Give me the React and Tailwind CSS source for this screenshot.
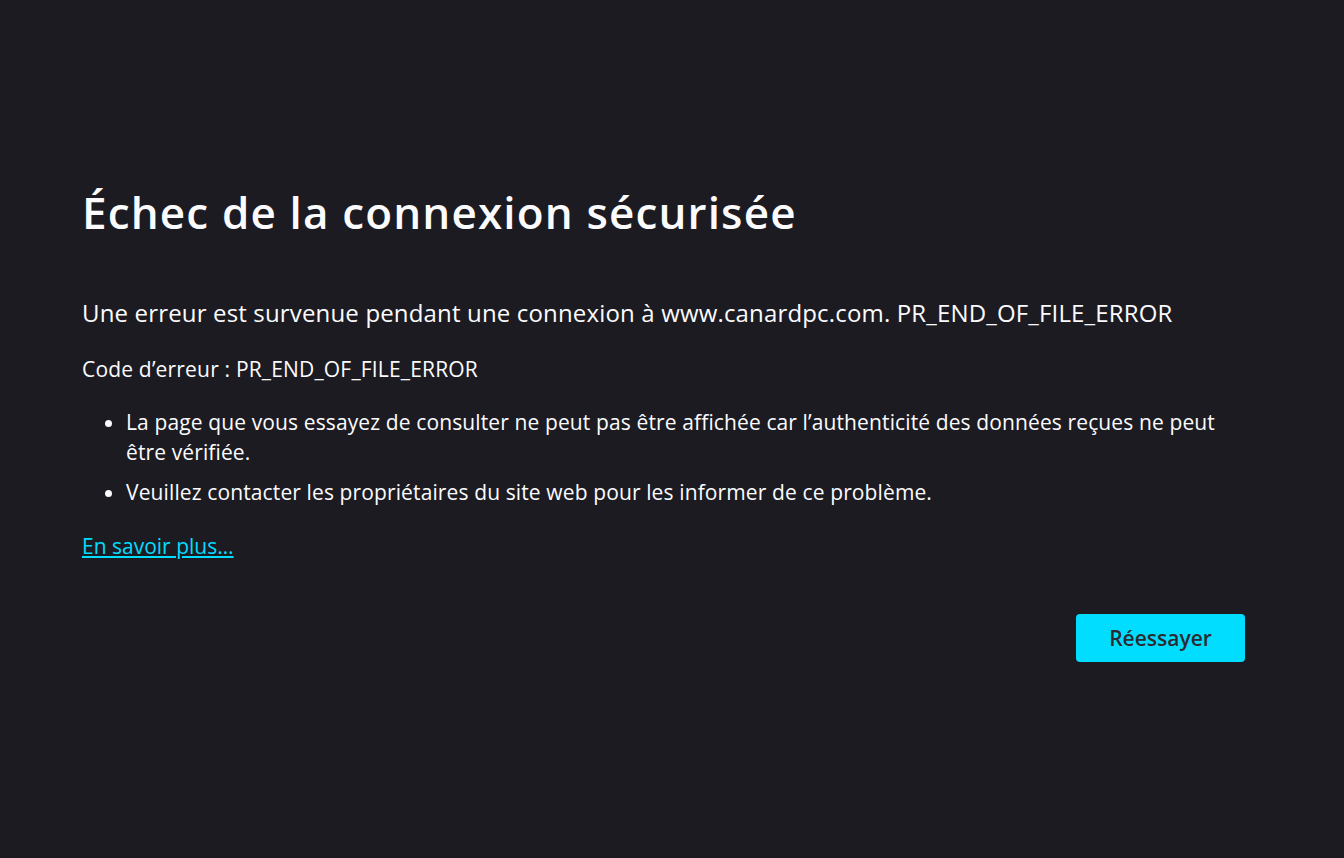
export default function App() {
  return (
    <div className="min-h-screen bg-[#1c1b22] text-[#fbfbfe] font-['Open_Sans',sans-serif]">
      <div className="pl-[82px] pr-[99px] pt-[184px]">
        <h1 className="text-[44px] font-semibold leading-[56px] tracking-[1.15px]">Échec de la connexion sécurisée</h1>

        <p className="mt-[57px] text-[24px] leading-[32px] tracking-[0.16px]">
          Une erreur est survenue pendant une connexion à www.canardpc.com. PR_END_OF_FILE_ERROR
        </p>

        <p className="mt-[25px] text-[21px] leading-[30px] tracking-[0.18px]">Code d’erreur : PR_END_OF_FILE_ERROR</p>

        <ul className="mt-[23px] list-disc pl-[44px] text-[21px] leading-[30px] tracking-[0.12px]">
          <li>
            La page que vous essayez de consulter ne peut pas être affichée car l’authenticité des données reçues ne peut
            être vérifiée.
          </li>
          <li className="mt-[10px]">Veuillez contacter les propriétaires du site web pour les informer de ce problème.</li>
        </ul>

        <a href="#" className="mt-[24px] inline-block text-[21px] leading-[30px] text-[#00ddff] underline">
          En savoir plus…
        </a>

        <div className="mt-[53px] flex justify-end">
          <button className="h-[48px] w-[169px] rounded-[4px] bg-[#00ddff] pt-[1px] text-[21px] font-semibold text-[#2b2a33]">
            Réessayer
          </button>
        </div>
      </div>
    </div>
  );
}
